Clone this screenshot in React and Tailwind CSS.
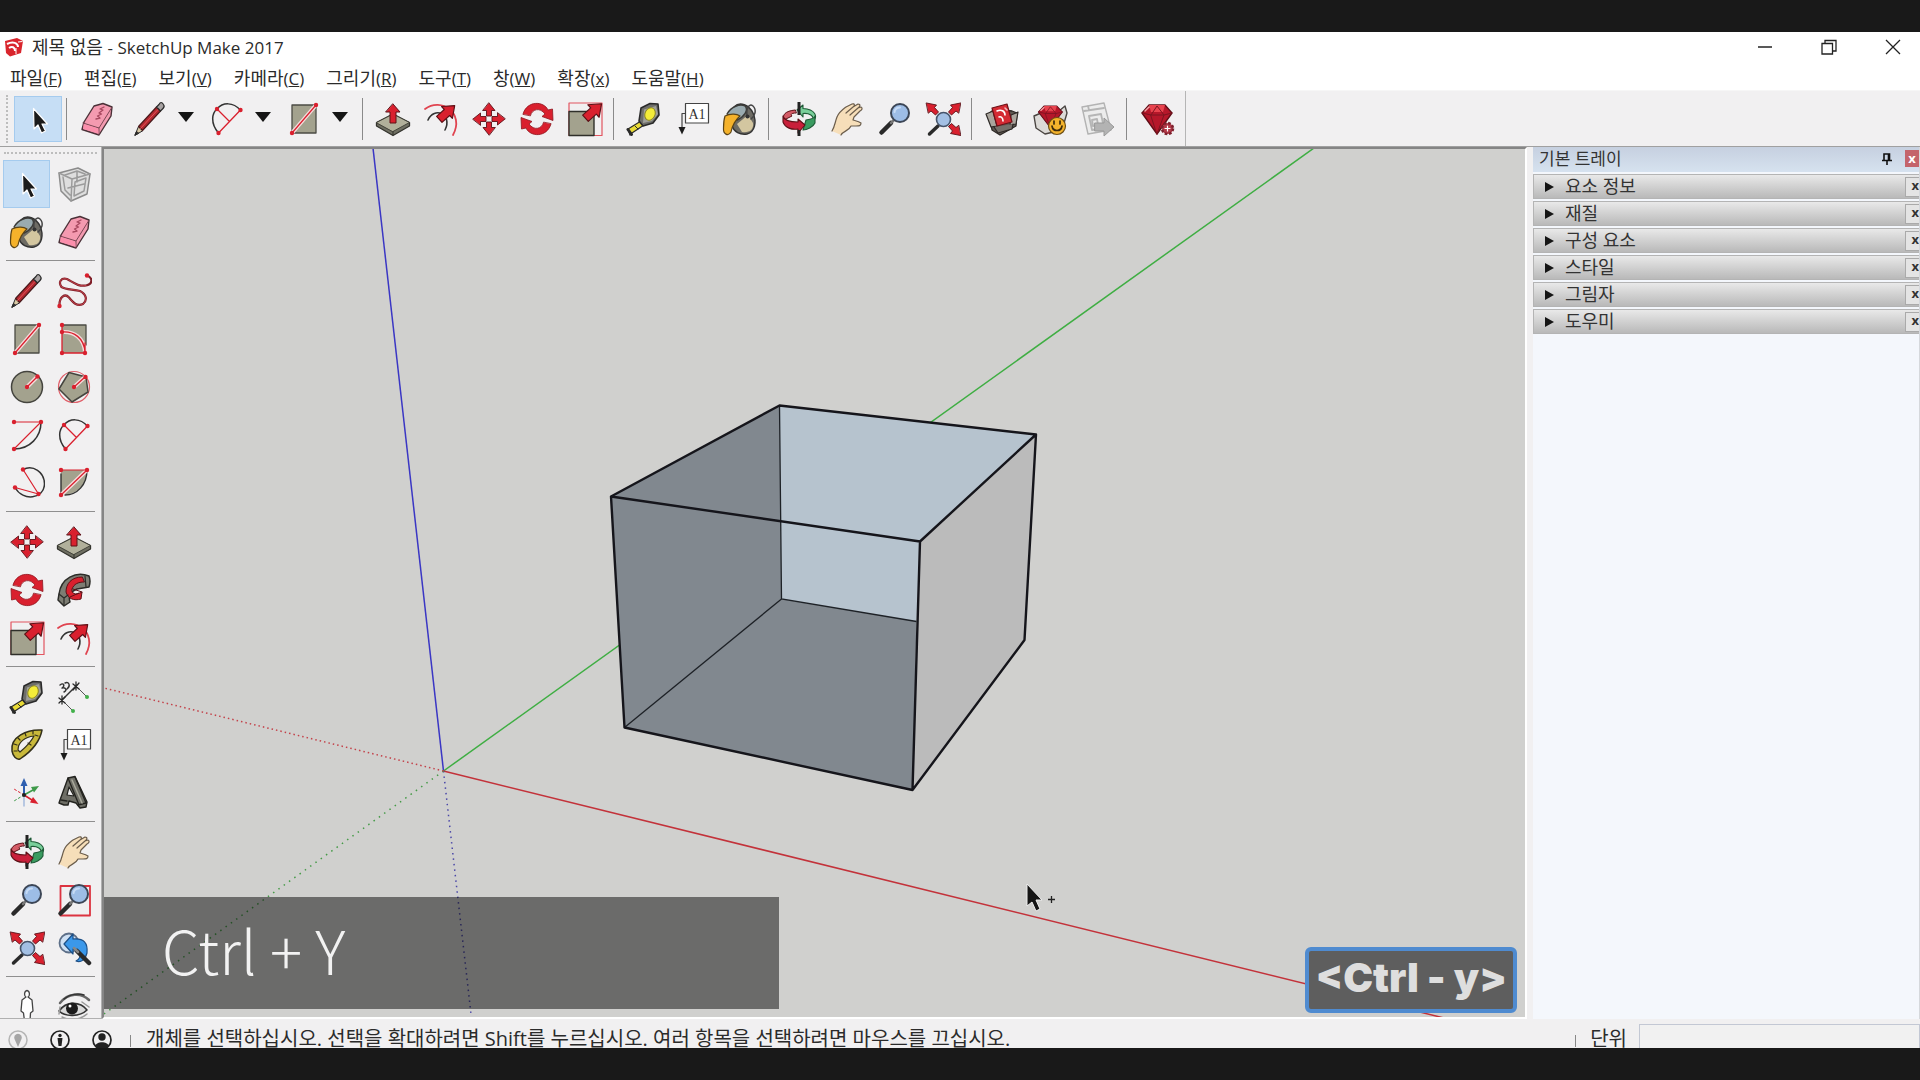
import React, { useState } from 'react';

const RED = '#d9202e';
const DARK = '#2a2a2a';
const CLAY = '#a3a28e';

const Icon = ({ children }) => (
  <svg viewBox="0 0 36 36" className="w-9 h-9" fill="none" strokeLinecap="round" strokeLinejoin="round" aria-hidden="true">
    {children}
  </svg>
);

const Dots = ({ points }) => points.map(([x, y]) => <circle key={`${x}-${y}`} cx={x} cy={y} r="2.2" fill={RED} />);

const BlockArrow = ({ transform }) => (
  <path transform={transform} d="M0-9 7 0H3.5V9H-3.5V0H-7Z" fill={RED} stroke="#5c1016" strokeWidth="1" />
);

const Lens = () => (
  <>
    <path d="M14 22 4.500 31.500" stroke={DARK} strokeWidth="4.500" />
    <path d="M17 19 14 22" stroke="#777" strokeWidth="2.500" />
    <circle cx="23" cy="12" r="9" fill="#9dbde6" stroke="#3c4656" strokeWidth="2" />
    <path d="M17.500 11C18 8 20 6.500 23 6.500" stroke="#c6dbf5" strokeWidth="2" />
  </>
);

const SelectIcon = () => (
  <Icon>
    <path d="M13.500 7.500 14 28 18 24 21.500 32 25.500 30 22 23 27.500 23Z" fill="#1b1b1b" stroke="#fff" strokeWidth="1.200" />
  </Icon>
);

const EraserIcon = () => (
  <Icon>
    <path d="M15 5 24 2.500 33 6 32 15 20 34 3 28.500 5 21Z" fill="#f49ab0" stroke="#4b3138" strokeWidth="1.400" />
    <path d="M4 22 20 27 32.500 7" stroke="#7c4654" strokeWidth="1" />
    <path d="M20 27V33.500" stroke="#7c4654" />
    <path d="M4.500 23 19 27.500 19.500 32.500 4.200 28Z" fill="#fb8fac" />
    <path d="M25 6 21 8 24 9 20 12 22.500 13 18.500 15 21 17 17 18" stroke="#a7485f" strokeWidth="1.300" />
  </Icon>
);

const PencilIcon = () => (
  <Icon>
    <path d="M3 34 6.500 25.500 10.500 29.500Z" fill="#d9c9a5" stroke={DARK} strokeWidth="1" />
    <path d="M3 34 4.500 30.500 6.500 32Z" fill={DARK} stroke={DARK} />
    <path d="M6.500 25.500 24.500 6 28.500 10 10.500 29.500Z" fill="#b3282f" stroke="#4a1a1c" strokeWidth="1.200" />
    <path d="M8.500 27.500 26 8.500" stroke="#e0565c" strokeWidth="1" />
    <path d="M24.500 6 27 3.500Q29-.500 31.500 3.500Q33 5.500 31 7.500L28.500 10Z" fill="#a7a2a2" stroke={DARK} strokeWidth="1.200" />
  </Icon>
);

const FreehandIcon = () => (
  <Icon>
    <path d="M3.500 33C3 24 9 20 13 24.500C17 29.500 21 34 27 31C32 27 30 21 24 18C18 16 10 17 5.500 14C2 9 5 4.500 11 6C17 9 22 14 30 12.500C37 11 37 5 31 2.500" stroke="#7f1e27" strokeWidth="2.200" />
    <path d="M3.500 33C3 24 9 20 13 24.500C17 29.500 21 34 27 31C32 27 30 21 24 18C18 16 10 17 5.500 14C2 9 5 4.500 11 6C17 9 22 14 30 12.500" stroke="#d8505a" strokeWidth=".700" />
    <Dots points={[[3.5, 33], [31, 2.5]]} />
  </Icon>
);

const RectIcon = () => (
  <Icon>
    <path d="M6 4H30V32H6Z" fill={CLAY} stroke="#4b4b44" strokeWidth="1.300" />
    <path d="M6 32 30 4" stroke="#f6dcdc" strokeWidth="4" />
    <path d="M6 32 30 4" stroke={RED} strokeWidth="1.200" />
    <Dots points={[[6, 32], [30, 4]]} />
  </Icon>
);

const RotatedRectIcon = () => (
  <Icon>
    <path d="M6 4H30V32H6Z" fill={CLAY} />
    <path d="M8 4H30V24" stroke="#4b4b44" strokeWidth="1.300" />
    <path d="M6 11C18 10 28 17 29 31" stroke="#f6dcdc" strokeWidth="4" />
    <path d="M6 11C18 10 28 17 29 31M6 4V32H29V22" stroke={RED} strokeWidth="1.300" />
    <Dots points={[[6, 4], [6, 11], [6, 32], [29, 32]]} />
  </Icon>
);

const CircleIcon = () => (
  <Icon>
    <circle cx="18" cy="18" r="15.500" fill={CLAY} stroke="#44443e" strokeWidth="1.500" />
    <path d="M18 18 28 8" stroke="#f6dcdc" strokeWidth="4" />
    <path d="M18 18 28 8" stroke={RED} strokeWidth="1.300" />
    <Dots points={[[18, 18], [28.5, 7.5]]} />
  </Icon>
);

const PolygonIcon = () => (
  <Icon>
    <circle cx="18" cy="18" r="15.500" stroke="#e0606a" strokeWidth="1.200" />
    <path d="M13 3.500 30 8 32 23 16 33 3 20Z" fill={CLAY} stroke="#44443e" strokeWidth="1.500" />
    <path d="M18 18 29 8" stroke="#f6dcdc" strokeWidth="4" />
    <path d="M18 18 29 8" stroke={RED} strokeWidth="1.300" />
    <Dots points={[[18, 18], [29.5, 8]]} />
  </Icon>
);

const ArcIcon = () => (
  <Icon>
    <path d="M32 5C32 20 21 32 5 32" stroke="#333" strokeWidth="1.500" />
    <path d="M5 5H32L5 32" stroke={RED} strokeWidth="1.100" />
    <Dots points={[[5, 5], [32, 5], [5, 32]]} />
  </Icon>
);

const TwoPointArcIcon = () => (
  <Icon>
    <path d="M9.500 32C1 22 3 12 8 8C14 1 24 1 31.500 9" stroke="#333" strokeWidth="1.500" />
    <path d="M9.500 32 31.500 9M8 8 20.500 20.500" stroke={RED} strokeWidth="1.300" />
    <Dots points={[[9.5, 32], [31.5, 9], [8, 8]]} />
  </Icon>
);

const ThreePointArcIcon = () => (
  <Icon>
    <path d="M14 4.500C24-.500 35.500 7 35.500 19C35 34 14 37 6 22.500" stroke="#333" strokeWidth="1.500" />
    <path d="M14 4.500 29.500 29 6 22.500" stroke={RED} strokeWidth="1.200" />
    <Dots points={[[14, 4.5], [29.5, 29], [6, 22.5]]} />
  </Icon>
);

const PieIcon = () => (
  <Icon>
    <path d="M5 5H31C31 20 21 30 5 30Z" fill={CLAY} />
    <path d="M31 5C31 20 21 30 9 30M5 9V28" stroke="#333" strokeWidth="1.400" />
    <path d="M31 5 5 30" stroke="#f6dcdc" strokeWidth="4" />
    <path d="M5 30 31 5H5" stroke={RED} strokeWidth="1.200" />
    <Dots points={[[5, 5], [31, 5], [5, 30]]} />
  </Icon>
);

const PushPullIcon = () => (
  <Icon>
    <path d="M1.500 21.500 18 13 34.500 21.500V25L18 34.500 1.500 25Z" fill="#6f6f62" stroke="#33332d" strokeWidth="1.300" />
    <path d="M1.500 21.500 18 13 34.500 21.500 18 30.500Z" fill="#b1b09b" stroke="#44443c" strokeWidth="1" />
    <path d="M18 30.500V34" stroke="#33332d" />
    <path d="M18 3 25 11H21V22H15V11H11Z" fill={RED} stroke="#5c1016" strokeWidth="1" />
  </Icon>
);

const OffsetIcon = () => (
  <Icon>
    <path d="M2 8C18-4 42 12 30 34" stroke="#e04450" strokeWidth="1.800" />
    <path d="M5 19C11 5 30 13 22 29" stroke="#333" strokeWidth="1.600" />
    <BlockArrow transform="translate(24 11.500) rotate(48) scale(1.150)" />
  </Icon>
);

const MoveIcon = () => (
  <Icon>
    {[0, 90, 180, 270].map((angle) => (
      <path
        key={angle}
        transform={`rotate(${angle} 18 18)`}
        d="M18 2 24 9.500H20.500V15H15.500V9.500H12Z"
        fill={RED}
        stroke="#5c1016"
        strokeWidth=".900"
      />
    ))}
  </Icon>
);

const RotateIcon = () => (
  <Icon>
    <path d="M4 13C8-1 25 0 29 9L33.500 8 34 19.500 23 15.500 26 13C21 6 13 8 11.500 14.500Z" fill={RED} stroke="#8e1720" strokeWidth=".800" />
    <path d="M32 23C28 37 11 36 7 27L2.500 28 2 16.500 13 20.500 10 23C15 30 23 28 24.500 21.500Z" fill={RED} stroke="#8e1720" strokeWidth=".800" />
  </Icon>
);

const ScaleIcon = () => (
  <Icon>
    <path d="M2 2H35V34.500H2Z" stroke="#e25560" strokeWidth="1.200" />
    <path d="M2 10.500H27V34.500H2Z" fill={CLAY} stroke="#2f2f2a" strokeWidth="1.400" />
    <BlockArrow transform="translate(26.500 10) rotate(48) scale(1.200)" />
  </Icon>
);

const FollowMeIcon = () => (
  <Icon>
    <path d="M33 4C20-1 5 6 3 22L2 28 8 34 14 30C12 24 15 19 21 17L33 15Q35 9 33 4Z" fill="#7d7d73" stroke="#2c2c28" strokeWidth="1.500" />
    <path d="M26 5C15 5 10 12 10 20C12 27 18 29 25 27L26 20C19 24 15 21 16 17C18 12 22 10 28 10Z" fill={RED} stroke="#5c1016" strokeWidth="1" />
    <path d="M17 17 26 20M14 25 23 21" stroke="#5c1016" strokeWidth="1" />
    <path d="M3 22 8 26 12 23M8 26V33M29 4 30 15" stroke="#2c2c28" strokeWidth="1.200" />
  </Icon>
);

const TapeIcon = () => (
  <Icon>
    <path d="M2 28 15 20 18 24 6 32 4 34Z" fill="#e9db36" stroke={DARK} strokeWidth="1.200" />
    <path d="M2 28.500 5.500 33.500" stroke={DARK} strokeWidth="3" />
    <path d="M9 25 12 28" stroke={DARK} />
    <path d="M15 7 24 2.500 32 3 33 14 27 22 17 25 13 20Z" fill="#6e6e6a" stroke={DARK} strokeWidth="1.600" />
    <path d="M18 8.500 30 5 32 13 26 20 17 22Z" fill="#a0a09a" />
    <ellipse cx="24" cy="13" rx="5" ry="6.500" transform="rotate(25 24 13)" fill="#f4ec39" stroke="#8a8420" strokeWidth="1" />
  </Icon>
);

const TextIcon = () => (
  <Icon>
    <path d="M11.500 2.500H34.500V22H11.500Z" fill="#fff" stroke="#444" strokeWidth="1.200" />
    <path d="M11 12.500H8V27" stroke="#444" strokeWidth="1.200" />
    <path d="M4.500 26H11.500L8 33.500Z" fill="#1b1b1b" />
    <text x="23" y="17.500" fontSize="14" textAnchor="middle" fill="#333" fontFamily="'Liberation Serif', serif">A1</text>
  </Icon>
);

const PaintIcon = () => (
  <Icon>
    <path d="M12 6C18 0 27 4 31 12C35 21 33 31 25 33C18 34 12 31 10 25Z" fill="#6d6b64" stroke="#333" strokeWidth="1.400" />
    <path d="M15 23 26 14 31 22C32 29 27 32 20 31Z" fill="#d3c6a0" />
    <path d="M5 13C9 6 18 2 23 5C27 9 22 16 15 19Z" fill="#9aabb0" stroke="#3b3b38" strokeWidth="1.400" />
    <path d="M25 15C24 7 27 2 31 5C35 9 33 15 29 18" stroke="#444" strokeWidth="1.500" />
    <circle cx="25.500" cy="15.500" r="2" fill="#333" />
    <path d="M3 15C9 12 15 13 18 15C14 18 10 25 9 31C6 36 1 33 1.500 27C1.500 22 2 18 3 15Z" fill="#f5b22b" stroke="#5c4518" strokeWidth="1.200" />
  </Icon>
);

const OrbitIcon = () => (
  <Icon>
    <path d="M14 9C4 10 1 14 3 19L11 15C9 13 11 12 15 12Z" fill="#d35b66" stroke="#5c1016" />
    <path d="M16 9 22 4V7.500C34 8 38 16 31 21C35 14 27 12 22 12.500V16Z" fill="#79cf9a" stroke="#1f5b37" strokeWidth="1.100" />
    <path d="M34 15V22C32 26 26 29 22 29L25 19C31 18 34 17 34 15Z" fill="#3a9b60" stroke="#1f5b37" strokeWidth="1.100" />
    <path d="M2 15V21C4 27 11 29 17 28V32L24 24 17 18V21C9 21 3 19 2 15Z" fill="#c81f3a" stroke="#5c1016" strokeWidth="1.100" />
    <path d="M18 1V14M18 29V35" stroke="#222" strokeWidth="3" strokeLinecap="butt" />
  </Icon>
);

const PanIcon = () => (
  <Icon>
    <path d="M3 30C6 25 6 21 8 16C10 11 13 9 17 6L23 3C26 2 26 5 24 6L29 3C32 3 31 6 29 7L32 6C34 7 33 9 31 10L25 16 24 19C27 20 29 20 32 22C32 25 30 25 27 25L22 25C20 30 14 30 12 34Z" fill="#f6deb9" />
    <path d="M3 30C6 25 6 21 8 16C10 11 13 9 17 6L23 3C26 2 26 5 24 6L17 12M24 6 29 3C32 3 31 6 29 7L21 14M29 7 32 6C34 7 33 9 31 10L25 16 24 19C27 20 29 20 32 22C32 25 30 25 27 25L22 25C20 30 14 30 12 34" stroke="#6b5d4c" strokeWidth="1.200" />
  </Icon>
);

const ZoomIcon = () => (
  <Icon>
    <Lens />
  </Icon>
);

const ZoomWindowIcon = () => (
  <Icon>
    <path d="M4.500 4H34V33.500H4.500Z" stroke="#dc3340" strokeWidth="1.800" />
    <Lens />
  </Icon>
);

const ZoomExtentsIcon = () => (
  <Icon>
    <path d="M13 25 4.500 33" stroke={DARK} strokeWidth="3.500" />
    <circle cx="18.500" cy="18.500" r="7" fill="#a3c0e4" stroke="#46546a" strokeWidth="1.600" />
    {['translate(1.500 2)', 'translate(35.500 2) scale(-1 1)', 'translate(35.500 34.500) scale(-1 -1)'].map((t) => (
      <path key={t} transform={t} d="M0 0 10 2 8 4.500 12 9 9 12 4.500 8 2 10Z" fill={RED} stroke="#5c1016" strokeWidth=".900" />
    ))}
  </Icon>
);

const PreviousIcon = () => (
  <Icon>
    <circle cx="13" cy="13" r="9.500" fill="#cfe0f3" stroke="#5d6f88" strokeWidth="1.800" />
    <path d="M8 14 17 4V9C28 8 32 13 31 23C29 30 25 33 20 31C24 29 25 25 23 21L17 19V24Z" fill="#3b98ea" stroke="#1d4f86" strokeWidth="1.200" />
    <path d="M21 21 33 33" stroke={DARK} strokeWidth="4.500" />
    <path d="M18 18 22 22" stroke="#888" strokeWidth="2.500" />
  </Icon>
);

const ComponentIcon = () => (
  <Icon>
    <path d="M3 7 22 2 34 8 31 28 15 35 5 25Z" fill="#dedede" stroke="#8b8b8b" strokeWidth="1.500" />
    <path d="M3 7 16 13 34 8M16 13 15 35M7 11 9 24 14 29M19 16 30 12 28 25 18 30ZM9 9 21 5 29 8M21 5V16M12 22 28 18" stroke="#9b9b9b" strokeWidth="1.500" />
  </Icon>
);

const DimensionIcon = () => (
  <Icon>
    <path d="M6 21 20 7" stroke="#333" strokeWidth="1.400" />
    <path d="M20 7 30 17M6 21 16 31" stroke="#555" />
    <path d="M17 5 23 10M23 4 17 11M20 3V11M3 19 9 24M9 18 3 24M6 17V25" stroke={DARK} strokeWidth="1.300" />
    <path d="M4 6C8 3 9 7 6 9C9 8 12 11 8 13M9 4C13 2 15 7 11 10" stroke="#333" strokeWidth="1.400" />
    <circle cx="31" cy="18" r="2" fill="#42b04a" />
    <circle cx="17" cy="32" r="2" fill="#42b04a" />
  </Icon>
);

const ProtractorIcon = () => (
  <Icon>
    <path d="M3 24C1 10 18 2 33 3C31 14 23 24 11 32C7 33 4 29 3 24Z" fill="#c9b93a" stroke="#33301a" strokeWidth="1.500" />
    <path d="M9 23C9 15 16 10 25 9C22 15 17 20 11 25Z" fill="#f1f0f0" stroke="#33301a" strokeWidth="1.200" />
    <path d="M5 17 8 18M9 11 11 13M16 6 17 9M24 4V7M5 24H8M29 9 26 8M22 18 19 16" stroke="#33301a" strokeWidth="1.200" />
  </Icon>
);

const AxesIcon = () => (
  <Icon>
    <path d="M15 20V10" stroke="#2f5fb0" strokeWidth="2" />
    <path d="M11.500 11 15 3 18.500 11Z" fill="#2f5fb0" />
    <path d="M15 20 24 15" stroke="#3f9a4a" strokeWidth="1.500" />
    <path d="M22 12 30 11 25 17.500Z" fill="#3f9a4a" />
    <path d="M15 20 23 25" stroke={RED} strokeWidth="1.500" />
    <path d="M24 22 29.500 29 21 27.500Z" fill={RED} />
    <path d="M15 20 5 14" stroke={RED} strokeDasharray="2 2.500" />
    <path d="M15 20 5 26" stroke="#3f9a4a" strokeDasharray="2 2.500" />
    <path d="M15 21V31" stroke="#9fb6dc" strokeWidth="1.400" />
    <circle cx="15" cy="20" r="2" fill="#222" />
  </Icon>
);

const TextSolidIcon = () => (
  <Icon>
    <path d="M4 25 12 3 19 1.500 31 27 30 32 24 33 20 28 13 26 12 30 8 30 3 28Z" fill="#6e6e66" stroke="#23231f" strokeWidth="1.400" />
    <path d="M12 3 23 30M19 2 30 28M5 25 11 26M22 30 30 28" stroke="#23231f" strokeWidth="1.300" />
    <path d="M13 12 11 20 18 21Z" fill="#f1f0f1" stroke="#23231f" strokeWidth="1.200" />
    <path d="M16 5 26 28" stroke="#a9a99c" strokeWidth="1.500" />
  </Icon>
);

const PersonIcon = () => (
  <Icon>
    <path d="M18 1.500C15 2 15 7 17 8L13 11 12 22 14.500 24 15.500 32H21L21.500 24 24 22 23 11 19 8C21 7 21 2 18 1.500Z" fill="#fff" stroke="#444" strokeWidth="1.300" />
    <path d="M14 33H17M20 33H23" stroke="#8c2530" strokeWidth="2" />
  </Icon>
);

const EyeIcon = () => (
  <Icon>
    <path d="M4 14C12 4 25 3 33 11" stroke="#666" strokeWidth="2.500" />
    <path d="M8 10C14 5 22 4 28 6" stroke="#333" strokeWidth="1.500" />
    <path d="M3 22C10 12 24 12 31 21C24 28 9 28 3 22Z" fill="#dadada" stroke="#333" strokeWidth="1.600" />
    <circle cx="16" cy="19.500" r="6" fill="#1b1b1b" />
    <circle cx="14" cy="17" r="1.500" fill="#fff" />
    <path d="M6 28C14 32 24 31 31 25M26 13 33 18M4 18 3 25" stroke="#999" strokeWidth="1.500" />
  </Icon>
);

const WarehouseIcon = () => (
  <Icon>
    <path d="M5 13 10 8 28 10 33 12 32 25 16 34 8 29Z" fill="#5f5953" stroke="#2d2926" strokeWidth="1.300" />
    <path d="M2 13 9 10 13 25 7 26ZM27 14 34 11 32 23 26 24Z" fill="#aaa59d" stroke="#2d2926" strokeWidth="1.200" />
    <path d="M10 26 14 32 28 28 29 23" fill="#76706a" stroke="#2d2926" strokeWidth="1.200" />
    <path d="M8 7 23 3 28 21 13 25Z" fill="#d42a33" stroke="#6c1117" strokeWidth="1.200" />
    <path d="M13 10C17 8 21 10 21 14M15 16C17 15 19 17 19 20" stroke="#fff" strokeWidth="1.600" />
    <path d="M21 7 23 9" stroke="#f3b6b9" strokeWidth="1.600" />
  </Icon>
);

const GemShape = () => (
  <>
    <path d="M3 12 10 4 26 4 33 12 18 33Z" fill="#b5172a" stroke="#5f0d16" strokeWidth="1.300" />
    <path d="M10 4H26L24 11H12Z" fill="#e8434e" />
    <path d="M3 12 12 14 18 5 25 14 33 12M12 14H25L18 33Z" stroke="#7c1420" strokeWidth="1" />
    <path d="M6 10 10 6" stroke="#f5a1a6" strokeWidth="1.500" />
  </>
);

const ExtWarehouseIcon = () => (
  <Icon>
    <path d="M2 15 9 12 27 10 33 5 35 12 30 29 13 33 4 27Z" fill="#dcdad7" stroke="#4a4542" strokeWidth="1.400" />
    <g transform="translate(4 2) scale(.800 .750)">
      <GemShape />
    </g>
    <circle cx="25" cy="25" r="8.500" fill="#f4b32c" stroke="#6b4d13" strokeWidth="1.200" />
    <path d="M22 20V23M28 20V23M20 25C21 31 29 31 30 25" stroke="#3d2c0c" strokeWidth="1.700" />
  </Icon>
);

const SendLayoutIcon = () => (
  <Icon>
    <path d="M2 6 24 2 31 29 8 33Z" fill="#ececec" stroke="#b3b3b3" strokeWidth="1.400" />
    <path d="M4 10 24 7M9 15 21 13 24 27 12 29ZM12 19 17 18 18 24 13 25ZM8 5 9 9" stroke="#b5b5b5" strokeWidth="1.800" />
    <path d="M15 22H24V17L34 26 24 35V30H15Z" fill="#b3b3b3" stroke="#999" />
  </Icon>
);

const ExtManagerIcon = () => (
  <Icon>
    <GemShape />
    <circle cx="28.500" cy="27.500" r="5.500" fill="#b23a49" stroke="#7c1f2c" strokeWidth="2.500" strokeDasharray="2.600 1.720" strokeLinecap="butt" />
    <path d="M26 27.500H31M28.500 25V30" stroke="#fff" strokeWidth="1.200" />
  </Icon>
);

const menus = [
  ['파일', 'F'],
  ['편집', 'E'],
  ['보기', 'V'],
  ['카메라', 'C'],
  ['그리기', 'R'],
  ['도구', 'T'],
  ['창', 'W'],
  ['확장', 'x'],
  ['도움말', 'H'],
];

const topGroups = [
  [{ name: '지우기', icon: EraserIcon }, { name: '선', icon: PencilIcon, menu: true }, { name: '호', icon: TwoPointArcIcon, menu: true }, { name: '직사각형', icon: RectIcon, menu: true }],
  [{ name: '밀기/끌기', icon: PushPullIcon }, { name: '오프셋', icon: OffsetIcon }, { name: '이동', icon: MoveIcon }, { name: '회전', icon: RotateIcon }, { name: '배율', icon: ScaleIcon }],
  [{ name: '줄자', icon: TapeIcon }, { name: '텍스트', icon: TextIcon }, { name: '페인트통', icon: PaintIcon }],
  [{ name: '궤도', icon: OrbitIcon }, { name: '이동 보기', icon: PanIcon }, { name: '확대/축소', icon: ZoomIcon }, { name: '범위 확대', icon: ZoomExtentsIcon }],
  [{ name: '3D Warehouse', icon: WarehouseIcon }, { name: 'Extension Warehouse', icon: ExtWarehouseIcon }, { name: 'LayOut으로 보내기', icon: SendLayoutIcon }],
  [{ name: '확장 관리자', icon: ExtManagerIcon }],
];

const sideGroups = [
  [SelectIcon, ComponentIcon, PaintIcon, EraserIcon],
  [PencilIcon, FreehandIcon, RectIcon, RotatedRectIcon, CircleIcon, PolygonIcon, ArcIcon, TwoPointArcIcon, ThreePointArcIcon, PieIcon],
  [MoveIcon, PushPullIcon, RotateIcon, FollowMeIcon, ScaleIcon, OffsetIcon],
  [TapeIcon, DimensionIcon, ProtractorIcon, TextIcon, AxesIcon, TextSolidIcon],
  [OrbitIcon, PanIcon, ZoomIcon, ZoomWindowIcon, ZoomExtentsIcon, PreviousIcon],
  [PersonIcon, EyeIcon],
];

const trayPanels = ['요소 정보', '재질', '구성 요소', '스타일', '그림자', '도우미'];

const TitleBar = () => (
  <header className="flex h-8 items-center bg-white pb-0.5 pl-1">
    <svg viewBox="0 0 20 20" className="mr-2 h-5 w-5" aria-hidden="true">
      <path d="M1 4 13 1 19 4 17 16 6 19.500 2 16Z" fill="#d9252d" />
      <path d="M3 7C9 4 14 6 14 10M5 11C8 9 11 10 11 14" fill="none" stroke="#fff" strokeWidth="2" />
      <path d="M14 5 18.500 4.500M12 17V11" stroke="#fff" strokeWidth="1" />
    </svg>
    <h1 className="text-[18px] leading-6">
      제목 없음 <span className="text-[17px]">- SketchUp Make 2017</span>
    </h1>
    <div className="ml-auto flex gap-2.5">
      <button aria-label="최소화" className="flex h-7 w-[54px] items-center justify-center">
        <svg viewBox="0 0 16 16" className="h-4 w-4"><path d="M1 8H15" stroke="#222" strokeWidth="1.500" /></svg>
      </button>
      <button aria-label="이전 크기로 복원" className="flex h-7 w-[54px] items-center justify-center">
        <svg viewBox="0 0 16 16" className="h-4 w-4" fill="none" stroke="#222" strokeWidth="1.300">
          <path d="M1 4.500H11.500V15H1ZM4 4V1.500H15V12H12" />
        </svg>
      </button>
      <button aria-label="닫기" className="flex h-7 w-[54px] items-center justify-center">
        <svg viewBox="0 0 16 16" className="h-4 w-4"><path d="M1 1 15 15M15 1 1 15" stroke="#222" strokeWidth="1.300" /></svg>
      </button>
    </div>
  </header>
);

const MenuBar = () => (
  <nav className="flex h-[26px] items-center gap-[22px] bg-white pl-2.5 pt-0.5">
    {menus.map(([label, key]) => (
      <button key={label} className="whitespace-nowrap text-[18px] leading-6">
        {label}<span className="text-[17px]">(<u>{key}</u>)</span>
      </button>
    ))}
  </nav>
);

const TopToolbar = () => (
  <div className="flex h-14 border-t border-[#f6f6f6]">
    <div className="flex items-center border-r border-[#b5b5b5] pl-1.5 pr-1">
      <div className="mr-1.5 h-12 border-l-2 border-dotted border-[#bdbdbd]" />
      <button aria-label="선택" className="flex h-[46px] w-12 items-center justify-center border border-[#a5cbee] bg-[#c6def5]">
        <SelectIcon />
      </button>
      {topGroups.map((group, index) => (
        <React.Fragment key={index}>
          <div className="ml-1 mr-1.5 h-[42px] w-px bg-[#8a8a8a]" />
          <div className={index === 0 ? 'flex gap-[5px] pr-1.5' : 'flex'}>
            {group.map(({ name, icon: ToolIcon, menu }) => (
              <div key={name} className="flex">
                <button aria-label={name} className="flex h-[46px] w-12 items-center justify-center">
                  <ToolIcon />
                </button>
                {menu && (
                  <button aria-label={`${name} 도구 더 보기`} className="flex w-6 items-center justify-center pb-1">
                    <svg viewBox="0 0 16 10" className="h-2.5 w-4"><path d="M0 0H16L8 10Z" fill="#151515" /></svg>
                  </button>
                )}
              </div>
            ))}
          </div>
        </React.Fragment>
      ))}
    </div>
  </div>
);

const SideToolbar = () => (
  <aside className="flex w-[102px] shrink-0 flex-col overflow-hidden border-b border-r border-[#b0b0b0] pl-[3px] pr-1 pt-[5px]">
    <div className="mb-1.5 ml-px border-t-2 border-dotted border-[#bdbdbd]" />
    {sideGroups.map((group, index) => (
      <React.Fragment key={index}>
        {index > 0 && <div className="mb-1.5 ml-[3px] mr-0.5 mt-1 h-px shrink-0 bg-[#8f8f8f]" />}
        <div className="grid shrink-0 grid-cols-2">
          {group.map((ToolIcon, i) => (
            <button
              key={i}
              aria-label={ToolIcon.name}
              className={`flex h-12 items-center justify-center ${index === 0 && i === 0 ? 'border border-[#a5cbee] bg-[#c6def5]' : ''}`}
            >
              <ToolIcon />
            </button>
          ))}
        </div>
      </React.Fragment>
    ))}
  </aside>
);

const Viewport = () => (
  <main className="relative min-w-0 flex-1 overflow-hidden border-2 border-b-white border-l-[#858585] border-r-white border-t-[#858585] bg-[#d0d0ce]">
    <svg viewBox="104 149 1421 869" preserveAspectRatio="xMinYMin slice" className="block h-full w-full" fill="none">
      {/* axes */}
      <g strokeWidth="1.500">
        <path d="M443.500 771 373 148" stroke="#3a36c4" />
        <path d="M443.500 771 1314 148" stroke="#3fae43" />
        <path d="M443.500 771 1444 1018" stroke="#c3323a" />
        <path d="M443.500 771 471 1014" stroke="#4a47a8" strokeDasharray="1.500 4" />
        <path d="M443.500 771 104 1014" stroke="#459a47" strokeDasharray="1.500 5" />
        <path d="M443.500 771 104 688" stroke="#c3424a" strokeDasharray="1.500 3" />
      </g>
      {/* open box */}
      <path d="M779.500 405.500 611 496.500 624.500 727.500 781.500 599Z" fill="#81888f" />
      <path d="M624.500 727.500 781.500 599 916.500 621.500 912.500 790Z" fill="#81888f" />
      <path d="M779.500 405.500 1036 434.500 920 541.500 916.500 621.500 781.500 599Z" fill="#b6c3ce" />
      <path d="M1036 434.500 1024.500 640 912.500 790 920 541.500Z" fill="#bbbbbb" />
      <path d="M779.500 405.500 781.500 599 916.500 621.500M781.500 599 624.500 727.500" stroke="#1d2126" strokeWidth="1.300" />
      <path
        d="M779.500 405.500 1036 434.500 920 541.500 611 496.500ZM611 496.500 624.500 727.500 912.500 790 1024.500 640 1036 434.500M920 541.500 912.500 790"
        stroke="#15151b"
        strokeWidth="2.400"
        strokeLinejoin="round"
      />
      {/* cursor */}
      <path d="M1027 884V906L1032 902 1036 911 1040 909 1036 900H1042Z" fill="#151515" stroke="#eee" strokeWidth="1" />
      <path d="M1048 899.500H1055M1051.500 896V903" stroke="#222" strokeWidth="1.300" />
    </svg>
    <div className="absolute bottom-2 left-0 flex h-28 w-[675px] items-center bg-[#060606]/50 pl-[58px] pb-2 font-['Noto_Sans_CJK_KR'] text-[60px] font-light leading-none text-[#f2f2f2]">
      Ctrl + Y
    </div>
    <div className="absolute bottom-1 right-2 flex h-[66px] items-center rounded-md border-4 border-[#4f8bd0] bg-[#5e5e5e] px-1.5 pb-1 font-['Inter'] text-[40px] font-black leading-none text-[#dedede]">
      &lt;Ctrl - y&gt;
    </div>
  </main>
);

const Tray = () => {
  const [open, setOpen] = useState(null);

  return (
    <aside className="ml-1.5 w-[387px] shrink-0 overflow-hidden border-r border-[#d5d8dc] bg-[#f4f7fc]">
      <div className="flex h-[25px] items-center bg-gradient-to-b from-[#c6d0e0] to-[#d6e2ef] pb-0.5 pl-1.5 text-[#333]">
        <h2 className="text-[17px] leading-6">기본 트레이</h2>
        <button aria-label="고정" className="ml-auto mr-3">
          <svg viewBox="0 0 12 14" className="h-3.5 w-3"><path d="M3 8V2H8.500V8M1 8.500H11M6 9V13M7.500 2V8" fill="none" stroke="#111" strokeWidth="1.600" /></svg>
        </button>
        <button aria-label="닫기" className="flex h-[17px] w-3.5 items-center justify-center bg-[#c4646b] text-[13px] font-bold text-white">x</button>
      </div>
      <div className="mt-0.5 flex flex-col gap-0.5">
        {trayPanels.map((name) => (
          <div key={name} className="flex h-[25px] items-center border border-r-0 border-[#b4b4b4] bg-gradient-to-b from-[#e9e9e9] to-[#b9b9b9]">
            <button onClick={() => setOpen(open === name ? null : name)} className="flex flex-1 items-center pl-[11px] text-left">
              <svg viewBox="0 0 9 10" className="mr-[11px] h-2.5 w-[9px]"><path d="M0 0 9 5 0 10Z" fill="#151515" /></svg>
              <span className="pb-0.5 text-[18px] leading-5 text-[#333]">{name}</span>
            </button>
            <button aria-label={`${name} 닫기`} className="flex h-5 w-3.5 items-center justify-end border border-r-0 border-[#aaa] bg-[#e4e4e4] pb-0.5 text-[13px] font-bold text-[#333]">
              x
            </button>
          </div>
        ))}
      </div>
    </aside>
  );
};

const StatusBar = () => (
  <footer className="flex h-[29px] shrink-0 items-start overflow-hidden text-[20px] leading-6">
    <div className="flex gap-[22px] pl-2 pt-[11px]">
      <svg viewBox="0 0 20 20" className="h-5 w-5" fill="none">
        <circle cx="10" cy="10" r="9" stroke="#b5b5b5" strokeWidth="1.500" />
        <path d="M10 17 6.500 9A3.800 3.800 0 1 1 13.500 9Z" fill="#a5a5a5" />
      </svg>
      <svg viewBox="0 0 20 20" className="h-5 w-5" fill="none">
        <circle cx="10" cy="10" r="9" stroke="#222" strokeWidth="1.700" />
        <path d="M7.500 8H12.500L11.500 16H8.500Z" fill="#222" />
        <circle cx="10" cy="5.500" r="1.700" fill="#222" />
      </svg>
      <svg viewBox="0 0 20 20" className="h-5 w-5" fill="none">
        <circle cx="10" cy="10" r="9" stroke="#222" strokeWidth="1.700" />
        <circle cx="10" cy="7" r="3.700" fill="#222" />
        <path d="M3.500 16C4 11 16 11 16.500 16L13 19H7Z" fill="#222" />
      </svg>
    </div>
    <div className="ml-[18px] mr-[15px] mt-4 h-3 w-px shrink-0 bg-[#888]" />
    <p className="whitespace-nowrap pt-2">개체를 선택하십시오. 선택을 확대하려면 Shift를 누르십시오. 여러 항목을 선택하려면 마우스를 끄십시오.</p>
    <div className="ml-auto mr-3.5 mt-4 h-3 w-px bg-[#888]" />
    <label htmlFor="measure" className="mr-3 pt-2">단위</label>
    <input id="measure" className="mt-[5px] h-8 w-[281px] border border-[#c3c8d4] bg-[#f1f1f1] px-2 outline-none" />
  </footer>
);

export default function App() {
  return (
    <div className="flex h-screen flex-col overflow-hidden bg-[#191919] py-8 font-['Open_Sans','Noto_Sans_CJK_KR',sans-serif] text-[#2b2b2b]">
      <div className="flex min-h-0 flex-1 flex-col bg-[#f1f0f1]">
        <TitleBar />
        <MenuBar />
        <TopToolbar />
        <div className="flex min-h-0 flex-1 border-t border-[#a0a0a0]">
          <SideToolbar />
          <Viewport />
          <Tray />
        </div>
        <StatusBar />
      </div>
    </div>
  );
}
